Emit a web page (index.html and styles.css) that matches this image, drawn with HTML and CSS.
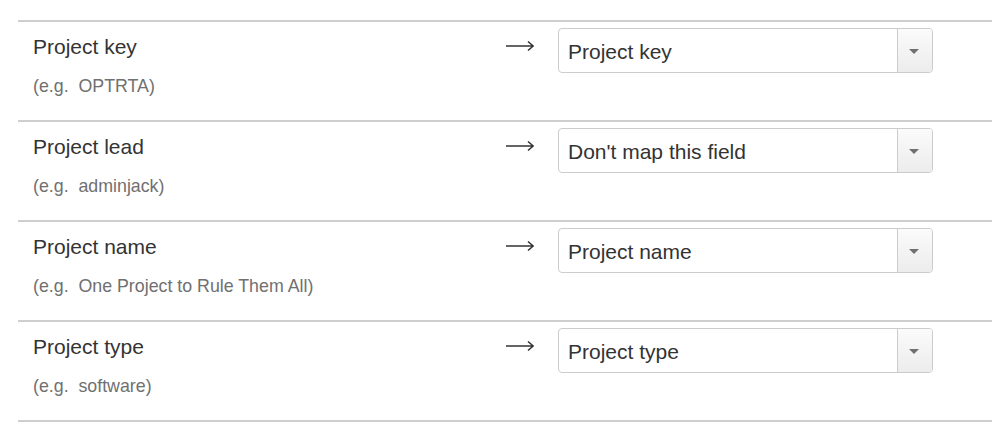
FILE: index.html
```html
<!DOCTYPE html>
<html>
<head>
<meta charset="utf-8">
<link rel="stylesheet" href="styles.css">
</head>
<body>
<div class="mapping">
  <div class="row">
    <div class="field">
      <div class="label">Project key</div>
      <div class="hint">(e.g.&nbsp; OPTRTA)</div>
    </div>
    <svg class="arrow" width="28" height="12" viewBox="0 0 28 12"><path d="M0 6H27M22 1.5L27.2 6L22 10.5" fill="none" stroke="#333" stroke-width="1.6"/></svg>
    <div class="select"><span class="value">Project key</span><span class="btn"><span class="caret"></span></span></div>
  </div>
  <div class="row">
    <div class="field">
      <div class="label">Project lead</div>
      <div class="hint">(e.g.&nbsp; adminjack)</div>
    </div>
    <svg class="arrow" width="28" height="12" viewBox="0 0 28 12"><path d="M0 6H27M22 1.5L27.2 6L22 10.5" fill="none" stroke="#333" stroke-width="1.6"/></svg>
    <div class="select"><span class="value">Don't map this field</span><span class="btn"><span class="caret"></span></span></div>
  </div>
  <div class="row">
    <div class="field">
      <div class="label">Project name</div>
      <div class="hint">(e.g.&nbsp; One Project to Rule Them All)</div>
    </div>
    <svg class="arrow" width="28" height="12" viewBox="0 0 28 12"><path d="M0 6H27M22 1.5L27.2 6L22 10.5" fill="none" stroke="#333" stroke-width="1.6"/></svg>
    <div class="select"><span class="value">Project name</span><span class="btn"><span class="caret"></span></span></div>
  </div>
  <div class="row last">
    <div class="field">
      <div class="label">Project type</div>
      <div class="hint">(e.g.&nbsp; software)</div>
    </div>
    <svg class="arrow" width="28" height="12" viewBox="0 0 28 12"><path d="M0 6H27M22 1.5L27.2 6L22 10.5" fill="none" stroke="#333" stroke-width="1.6"/></svg>
    <div class="select"><span class="value">Project type</span><span class="btn"><span class="caret"></span></span></div>
  </div>
</div>
</body>
</html>
```
FILE: styles.css
```css
html, body {
  margin: 0;
  padding: 0;
  background: #fff;
}
body {
  font-family: "Liberation Sans", Arial, sans-serif;
  color: #333;
}
.mapping {
  padding: 20px 0 0 18px;
}
.row {
  display: grid;
  grid-template-columns: 473px 52px 375px;
  align-items: start;
  height: 98px;
  padding-left: 15px;
  border-top: 2px solid #cfcfcf;
}
.row.last {
  border-bottom: 2px solid #cfcfcf;
}
.field {
  margin-top: 10px;
}
.label {
  font-size: 21px;
  line-height: 30px;
  color: #333;
}
.hint {
  margin-top: 12px;
  font-size: 17.8px;
  line-height: 24px;
  color: #707070;
}
.arrow {
  display: block;
  margin-top: 18px;
}
.select {
  margin-top: 6px;
  height: 43px;
  border: 1px solid #cccccc;
  border-radius: 4px;
  display: flex;
  align-items: center;
  overflow: hidden;
  background: #fff;
}
.value {
  flex: 1;
  padding: 3px 0 0 9px;
  font-size: 21px;
  line-height: 30px;
  color: #333;
}
.btn {
  width: 34px;
  height: 100%;
  border-left: 1px solid #cccccc;
  background: linear-gradient(#fbfbfb, #ececec);
  display: flex;
  align-items: center;
  justify-content: center;
}
.caret {
  width: 0;
  height: 0;
  border-left: 5.5px solid transparent;
  border-right: 5.5px solid transparent;
  border-top: 5px solid #707070;
  margin-left: -2px;
  margin-top: 1px;
}
```
